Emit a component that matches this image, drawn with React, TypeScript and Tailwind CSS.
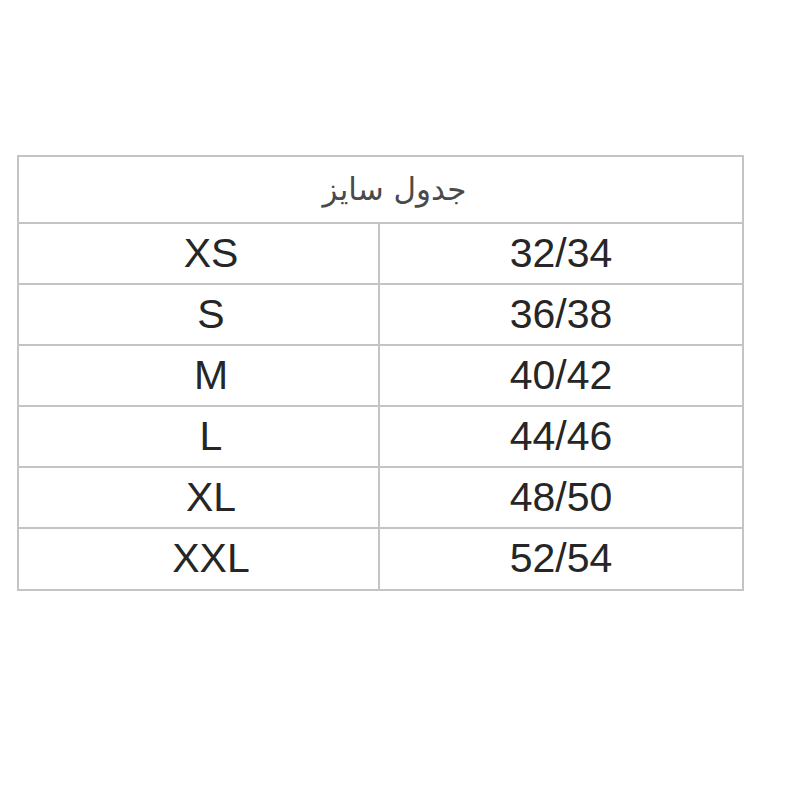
const ROWS = [
  ["XS", "32/34"],
  ["S", "36/38"],
  ["M", "40/42"],
  ["L", "44/46"],
  ["XL", "48/50"],
  ["XXL", "52/54"],
];

export default function App() {
  return (
    <div className="w-[800px] h-[800px] bg-white pt-[155px] pl-[17px]">
      <div className="w-[727px] border-2 border-[#c4c4c4] bg-white">
        <div
          className="h-[67px] border-b-2 border-[#c4c4c4] flex items-center justify-center pl-[28px] text-[31px] text-[#4a4a4a]"
          dir="rtl"
          style={{ fontFamily: '"DejaVu Sans", sans-serif' }}
        >
          جدول سایز
        </div>
        {ROWS.map(([size, num], i) => (
          <div
            key={size}
            className={`flex ${i < ROWS.length - 1 ? "h-[61px] border-b-2 border-[#c4c4c4]" : "h-[60px]"}`}
            style={{ fontFamily: '"Liberation Sans", Arial, sans-serif' }}
          >
            <div className="w-[361px] border-r-2 border-[#c4c4c4] flex items-center justify-center pl-[25px] text-[41px] text-[#262626]">
              {size}
            </div>
            <div className="flex-1 flex items-center justify-center text-[41px] text-[#262626]">
              {num}
            </div>
          </div>
        ))}
      </div>
    </div>
  );
}
